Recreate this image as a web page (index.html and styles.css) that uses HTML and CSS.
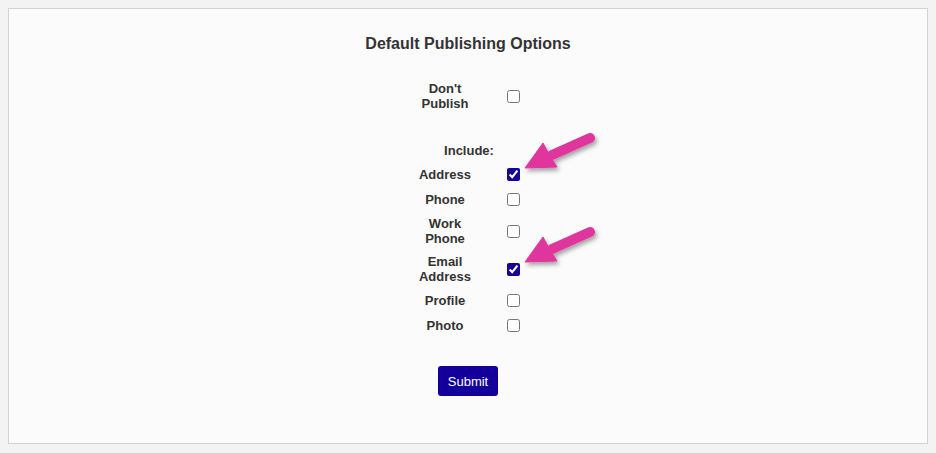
FILE: index.html
```html
<!DOCTYPE html>
<html>
<head>
<meta charset="utf-8">
<link rel="stylesheet" href="styles.css">
</head>
<body>
<div class="panel">
  <h2 class="title">Default Publishing Options</h2>
  <form class="opts">
    <div class="row dbl"><span class="lbl">Don't<br>Publish</span><span class="cb"><input type="checkbox"></span></div>
    <div class="spacer"></div>
    <div class="row inc"><span class="lbl span2">Include:</span></div>
    <div class="row"><span class="lbl">Address</span><span class="cb"><input type="checkbox" checked></span></div>
    <div class="row"><span class="lbl">Phone</span><span class="cb"><input type="checkbox"></span></div>
    <div class="row dbl"><span class="lbl">Work<br>Phone</span><span class="cb"><input type="checkbox"></span></div>
    <div class="row dbl"><span class="lbl">Email<br>Address</span><span class="cb"><input type="checkbox" checked></span></div>
    <div class="row"><span class="lbl">Profile</span><span class="cb"><input type="checkbox"></span></div>
    <div class="row"><span class="lbl">Photo</span><span class="cb"><input type="checkbox"></span></div>
    <div class="actions"><button type="button" class="submit">Submit</button></div>
  </form>
</div>
<svg class="arrow a1" width="95" height="58" viewBox="0 0 95 58"><defs><filter id="sh" x="-20%" y="-20%" width="150%" height="170%"><feDropShadow dx="2" dy="3" stdDeviation="2" flood-color="#000" flood-opacity="0.35"/></filter></defs><g filter="url(#sh)" fill="#e0359c" stroke="#e0359c"><line x1="80" y1="12" x2="42" y2="29" stroke-width="10" stroke-linecap="round"/><polygon points="15,42 33,17 40,30 47,41" stroke-width="1" stroke-linejoin="round"/></g></svg>
<svg class="arrow a2" width="95" height="58" viewBox="0 0 95 58"><g filter="url(#sh)" fill="#e0359c" stroke="#e0359c"><line x1="80" y1="12" x2="42" y2="29" stroke-width="10" stroke-linecap="round"/><polygon points="15,42 33,17 40,30 47,41" stroke-width="1" stroke-linejoin="round"/></g></svg>
</body>
</html>
```
FILE: styles.css
```css
html, body { margin: 0; padding: 0; }
body {
  background: #f3f3f3;
  padding: 8px;
  font-family: "Liberation Sans", Arial, sans-serif;
  color: #333;
}
.panel {
  background: #fbfbfb;
  border: 1px solid #d2d2d2;
  height: 434px;
  display: flex;
  flex-direction: column;
  align-items: center;
}
.title {
  margin: 26px 0 0;
  font-size: 16px;
  line-height: 18px;
  font-weight: bold;
  color: #333;
}
.opts {
  margin-top: 24px;
  display: flex;
  flex-direction: column;
  width: 136px;
}
.row {
  display: grid;
  grid-template-columns: 90px 46px;
  align-items: center;
  height: 25px;
  font-size: 13px;
  font-weight: bold;
  line-height: 15px;
}
.row.dbl { height: 38px; }
.row.inc { height: 23px; }
.spacer { height: 24px; }
.lbl { text-align: center; }
.lbl.span2 { grid-column: 1 / 3; padding-left: 2px; }
.cb { display: flex; justify-content: center; }
.cb input {
  margin: 0;
  width: 13px;
  height: 13px;
  accent-color: #15009a;
}
.actions {
  display: flex;
  justify-content: center;
  margin-top: 28px;
}
.submit {
  background: #13009a;
  color: #fff;
  border: none;
  border-radius: 3px;
  width: 60px;
  height: 30px;
  font-family: "Liberation Sans", Arial, sans-serif;
  font-size: 13px;
  padding: 0;
}
.arrow { position: absolute; }
.a1 { left: 510px; top: 126px; }
.a2 { left: 510px; top: 220px; }
```
